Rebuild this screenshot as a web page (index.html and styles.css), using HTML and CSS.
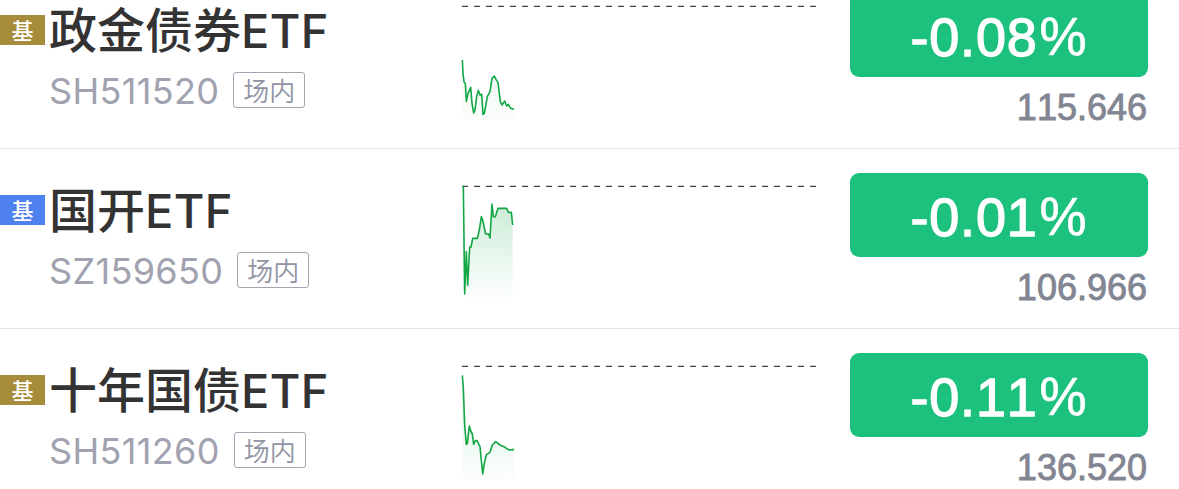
FILE: index.html
```html
<!DOCTYPE html>
<html lang="zh-CN">
<head>
  <meta charset="UTF-8">
  <title>自选基金</title>
  <link rel="stylesheet" href="styles.css">
</head>
<body>
  <svg class="defs" width="0" height="0">
    <defs>
      <linearGradient id="fade" x1="0" y1="0" x2="0" y2="360" gradientUnits="userSpaceOnUse">
        <stop offset="0.2" stop-color="#12a644" stop-opacity="0.22"/>
        <stop offset="1" stop-color="#12a644" stop-opacity="0"/>
      </linearGradient>
      <linearGradient id="fade-light" x1="0" y1="0" x2="0" y2="360" gradientUnits="userSpaceOnUse">
        <stop offset="0.2" stop-color="#12a644" stop-opacity="0.16"/>
        <stop offset="1" stop-color="#12a644" stop-opacity="0.01"/>
      </linearGradient>
    </defs>
  </svg>

  <div class="list">
    <div class="row">
      <span class="badge gold">基</span>
      <div class="info">
        <div class="name">政金债券<span class="latin">ETF</span></div>
        <div class="meta"><span class="code">SH511520</span><span class="tag">场内</span></div>
      </div>
      <svg class="chart" viewBox="0 0 1080 360">
        <line class="base" x1="6" y1="19" x2="1068" y2="19"/>
        <polygon fill="url(#fade-light)" points="7,180 9,220 12,245 16,250 19,304 24,280 32,262 36,310 41,339 45,330 50,290 55,271 60,285 65,283 69,343 73,340 82,290 90,275 96,235 103,228 108,238 114,247 121,305 126,315 134,303 140,318 145,313 152,325 162,328 162,360 7,360"/>
        <polyline class="line" points="7,180 9,220 12,245 16,250 19,304 24,280 32,262 36,310 41,339 45,330 50,290 55,271 60,285 65,283 69,343 73,340 82,290 90,275 96,235 103,228 108,238 114,247 121,305 126,315 134,303 140,318 145,313 152,325 162,328"/>
      </svg>
      <div class="quote">
        <div class="change"><span>-0.08</span><span class="pct">%</span></div>
        <div class="price">115.646</div>
      </div>
    </div>

    <div class="row">
      <span class="badge blue">基</span>
      <div class="info">
        <div class="name">国开<span class="latin">ETF</span></div>
        <div class="meta"><span class="code">SZ159650</span><span class="tag">场内</span></div>
      </div>
      <svg class="chart" viewBox="0 0 1080 360">
        <line class="base" x1="6" y1="19" x2="1068" y2="19"/>
        <polygon fill="url(#fade)" points="10,20 12,175 14,342 19,215 23,316 29,201 33,201 38,175 52,175 58,150 64,110 68,120 77,162 86,162 90,174 96,72 100,110 106,110 114,85 140,85 145,97 154,97 158,135 158,360 10,360"/>
        <polyline class="line" points="10,17 12,175 14,342 19,215 23,316 29,201 33,201 38,175 52,175 58,150 64,110 68,120 77,162 86,162 90,174 96,72 100,110 106,110 114,85 140,85 145,97 154,97 158,135"/>
      </svg>
      <div class="quote">
        <div class="change"><span>-0.01</span><span class="pct">%</span></div>
        <div class="price">106.966</div>
      </div>
    </div>

    <div class="row">
      <span class="badge gold">基</span>
      <div class="info">
        <div class="name">十年国债<span class="latin">ETF</span></div>
        <div class="meta"><span class="code">SH511260</span><span class="tag">场内</span></div>
      </div>
      <svg class="chart" viewBox="0 0 1080 360">
        <line class="base" x1="6" y1="19" x2="1068" y2="19"/>
        <polygon fill="url(#fade-light)" points="7,46 10,85 14,195 19,253 22,250 28,198 33,215 37,222 41,253 46,242 51,242 60,260 68,342 73,310 79,284 90,277 97,255 107,245 120,255 132,260 145,269 157,270 162,267 162,360 7,360"/>
        <polyline class="line" points="7,46 10,85 14,195 19,253 22,250 28,198 33,215 37,222 41,253 46,242 51,242 60,260 68,342 73,310 79,284 90,277 97,255 107,245 120,255 132,260 145,269 157,270 162,267"/>
      </svg>
      <div class="quote">
        <div class="change"><span>-0.11</span><span class="pct">%</span></div>
        <div class="price">136.520</div>
      </div>
    </div>
  </div>
</body>
</html>
```

FILE: styles.css
```css
body {
  margin: 0;
  height: 489px;
  overflow: hidden;
  background: #fff;
  font-family: "Liberation Sans", "Noto Sans CJK SC", sans-serif;
}

.defs {
  display: block;
}

/* 列表向上滚动了一段 */
.list {
  margin-top: -31px;
}

.row {
  display: grid;
  grid-template-columns: 45px 415px 360px 328px;
  align-items: start;
  height: 180px;
  box-sizing: border-box;
  border-bottom: 1px solid #e3e3e6;
}

.badge {
  margin-top: 46px;
  height: 30px;
  line-height: 28px;
  text-align: center;
  font-family: "Noto Sans CJK SC", sans-serif;
  font-size: 22px;
  font-weight: 500;
  color: #fff;
}
.gold {
  background: #a68c3b;
}
.blue {
  background: #4e80ee;
}

.info {
  padding: 32px 0 0 4px;
}
.name {
  height: 60px;
  line-height: 52px;
  font-family: "Noto Sans CJK SC", sans-serif;
  font-size: 48px;
  font-weight: 500;
  color: #333;
  white-space: nowrap;
}
.latin {
  font-family: Inter, sans-serif;
  font-size: 47px;
  letter-spacing: 0.3px;
}
.meta {
  display: flex;
  align-items: center;
  height: 36px;
  margin-top: 11px;
}
.code {
  margin-right: 14px;
  padding-top: 2px;
  font-family: Inter, sans-serif;
  font-size: 36px;
  font-weight: 400;
  letter-spacing: 0.35px;
  line-height: 36px;
  color: #a0a2af;
}
.tag {
  box-sizing: border-box;
  width: 72px;
  height: 36px;
  line-height: 33px;
  border: 1px solid #a3a5b3;
  border-radius: 3px;
  text-align: center;
  font-family: "Noto Sans CJK SC", sans-serif;
  font-size: 26px;
  font-weight: 350;
  color: #9093a3;
}

.chart {
  display: block;
  margin-top: 31px;
  width: 360px;
  height: 120px;
}
.base {
  stroke: #444;
  stroke-width: 4;
  stroke-dasharray: 18 18;
}
.line {
  fill: none;
  stroke: #12a644;
  stroke-width: 4.8;
  stroke-linejoin: round;
}

.quote {
  padding: 24px 0 0 30px;
}
.change {
  display: flex;
  justify-content: center;
  height: 84px;
  line-height: 88px;
  border-radius: 9px;
  background: #1dc17e;
  color: #fff;
  font-size: 54px;
  font-kerning: none;
  letter-spacing: 0.8px;
  -webkit-text-stroke: 1.3px #fff;
}
.pct {
  margin-left: 2px;
  font-size: 53px;
  -webkit-text-stroke-width: 0.6px;
}
.price {
  margin: 10px 1px 0 0;
  line-height: 42px;
  text-align: right;
  font-size: 36px;
  font-kerning: none;
  color: #828592;
  -webkit-text-stroke: 0.9px #828592;
}
```
